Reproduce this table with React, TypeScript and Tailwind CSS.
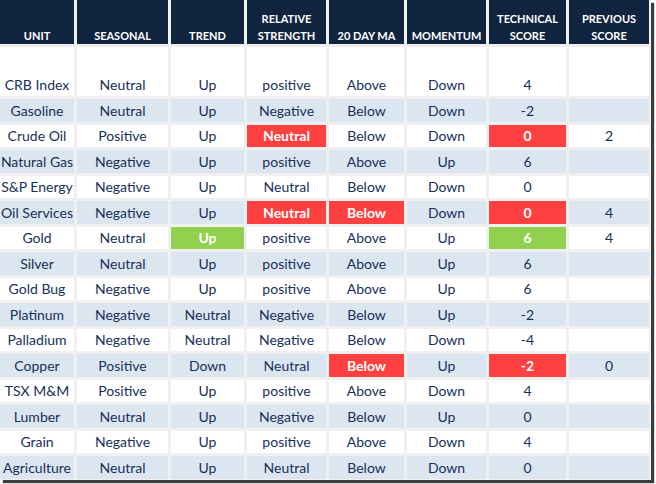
import React from "react";

type Cell = { v: string; hl?: "red" | "green" };

const headers = [
  ["UNIT"],
  ["SEASONAL"],
  ["TREND"],
  ["RELATIVE", "STRENGTH"],
  ["20 DAY MA"],
  ["MOMENTUM"],
  ["TECHNICAL", "SCORE"],
  ["PREVIOUS", "SCORE"],
];

const R = (v: string): Cell => ({ v, hl: "red" });
const G = (v: string): Cell => ({ v, hl: "green" });

const rows: (string | Cell)[][] = [
  ["CRB Index", "Neutral", "Up", "positive", "Above", "Down", "4", ""],
  ["Gasoline", "Neutral", "Up", "Negative", "Below", "Down", "-2", ""],
  ["Crude Oil", "Positive", "Up", R("Neutral"), "Below", "Down", R("0"), "2"],
  ["Natural Gas", "Negative", "Up", "positive", "Above", "Up", "6", ""],
  ["S&P Energy", "Negative", "Up", "Neutral", "Below", "Down", "0", ""],
  ["Oil Services", "Negative", "Up", R("Neutral"), R("Below"), "Down", R("0"), "4"],
  ["Gold", "Neutral", G("Up"), "positive", "Above", "Up", G("6"), "4"],
  ["Silver", "Neutral", "Up", "positive", "Above", "Up", "6", ""],
  ["Gold Bug", "Negative", "Up", "positive", "Above", "Up", "6", ""],
  ["Platinum", "Negative", "Neutral", "Negative", "Below", "Up", "-2", ""],
  ["Palladium", "Negative", "Neutral", "Negative", "Below", "Down", "-4", ""],
  ["Copper", "Positive", "Down", "Neutral", R("Below"), "Up", R("-2"), "0"],
  ["TSX M&M", "Positive", "Up", "positive", "Above", "Down", "4", ""],
  ["Lumber", "Neutral", "Up", "Negative", "Below", "Up", "0", ""],
  ["Grain", "Negative", "Up", "positive", "Above", "Down", "4", ""],
  ["Agriculture", "Neutral", "Up", "Neutral", "Below", "Down", "0", ""],
];

const cols = "grid grid-cols-[74px_91px_73px_79px_75px_79px_77px_80px] gap-x-[3px]";

const App = () => {
  return (
    <div className="w-[656px] h-[484px] bg-white" style={{ fontFamily: "Lato, 'Open Sans', sans-serif" }}>
      <div className="w-[651px] bg-[#f0f0f0] pr-[2px] pb-[1px] shadow-[3px_3px_1px_#3c3c3c] flex flex-col gap-y-[3px]">
        {/* HEADER */}
        <div className={cols}>
          {headers.map((h, i) => (
            <div
              key={i}
              className="h-[44px] bg-[#10233f] text-white font-bold text-[11px] leading-[17px] flex flex-col items-center justify-end text-center"
            >
              {h.map((t) => (
                <span key={t}>{t}</span>
              ))}
            </div>
          ))}
        </div>
        {/* ROWS */}
        {rows.map((r, ri) => (
          <div key={ri} className={cols}>
            {r.map((c, ci) => {
              const cell: Cell = typeof c === "string" ? { v: c } : c;
              const bg =
                cell.hl === "red"
                  ? "bg-[#ff4040] text-white font-bold"
                  : cell.hl === "green"
                  ? "bg-[#92d050] text-white font-bold"
                  : ri % 2 === 1
                  ? "bg-[#dce6f1] text-[#17305a]"
                  : "bg-white text-[#17305a]";
              return (
                <div
                  key={ci}
                  className={`${ri === 0 ? "h-[49px]" : "h-[22.5px]"} ${bg} flex items-end justify-center text-[14px] whitespace-nowrap overflow-hidden`}
                >
                  <span className="h-[22px] leading-[22px]">{cell.v}</span>
                </div>
              );
            })}
          </div>
        ))}
      </div>
    </div>
  );
};

export default App;
